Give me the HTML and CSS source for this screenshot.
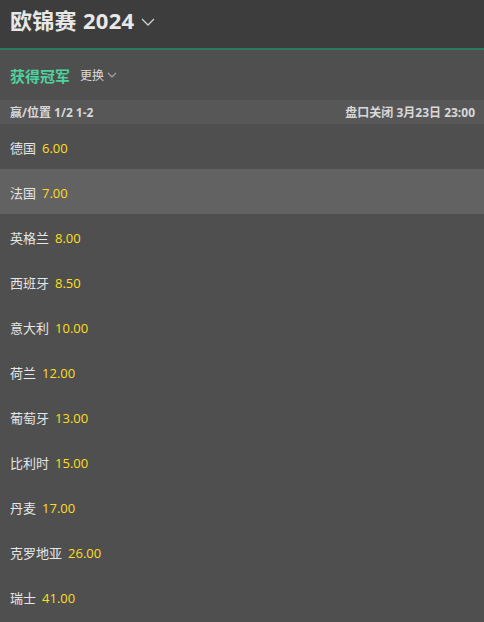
FILE: index.html
```html
<!DOCTYPE html>
<html lang="zh">
<head>
<meta charset="utf-8">
<link rel="stylesheet" href="styles.css">
</head>
<body>
<header class="top">
  <h1 class="title">欧锦赛 2024 <svg class="chev-lg" viewBox="0 0 14 8" width="14" height="8"><path d="M1 1 L7 7 L13 1" fill="none" stroke="#cfcfcf" stroke-width="1.3"/></svg></h1>
</header>
<div class="market">
  <span class="market-name">获得冠军</span>
  <span class="switch">更换 <svg class="chev-sm" viewBox="0 0 10 6" width="10" height="6"><path d="M1 1 L5 5 L9 1" fill="none" stroke="#a8a8a8" stroke-width="1.1"/></svg></span>
</div>
<div class="band">
  <span>赢/位置 1/2 1-2</span>
  <span>盘口关闭 3月23日 23:00</span>
</div>
<ul class="list">
  <li class="row"><span class="team">德国</span><span class="odds">6.00</span></li>
  <li class="row active"><span class="team">法国</span><span class="odds">7.00</span></li>
  <li class="row"><span class="team">英格兰</span><span class="odds">8.00</span></li>
  <li class="row"><span class="team">西班牙</span><span class="odds">8.50</span></li>
  <li class="row"><span class="team">意大利</span><span class="odds">10.00</span></li>
  <li class="row"><span class="team">荷兰</span><span class="odds">12.00</span></li>
  <li class="row"><span class="team">葡萄牙</span><span class="odds">13.00</span></li>
  <li class="row"><span class="team">比利时</span><span class="odds">15.00</span></li>
  <li class="row"><span class="team">丹麦</span><span class="odds">17.00</span></li>
  <li class="row"><span class="team">克罗地亚</span><span class="odds">26.00</span></li>
  <li class="row"><span class="team">瑞士</span><span class="odds">41.00</span></li>
</ul>
</body>
</html>
```
FILE: styles.css
```css
* { box-sizing: border-box; }
html, body { margin: 0; padding: 0; }
body {
  background: #4f4f4f;
  font-family: "Open Sans", "Noto Sans CJK SC", sans-serif;
  color: #e2e2e2;
  width: 484px;
  height: 622px;
  overflow: hidden;
}
.top {
  height: 50px;
  background: #3d3d3d;
  border-bottom: 2px solid #2b7a60;
  display: flex;
  align-items: flex-start;
  padding: 7px 10px 0;
}
.title {
  margin: 0;
  font-size: 22px;
  font-weight: 700;
  color: #e8e8e8;
  line-height: 26px;
  display: flex;
  align-items: center;
  letter-spacing: 0.3px;
}
.chev-lg { margin-left: 7px; margin-top: 3px; }
.market {
  height: 50px;
  display: flex;
  align-items: center;
  padding: 0 10px;
  gap: 10px;
}
.market-name {
  font-size: 15px;
  font-weight: 700;
  color: #4fd19f;
}
.switch {
  font-size: 12px;
  color: #dcdcdc;
  display: flex;
  align-items: center;
  gap: 3px;
}
.band {
  height: 24px;
  background: #575757;
  display: flex;
  align-items: center;
  justify-content: space-between;
  padding: 0 9px 0 10px;
  font-size: 12px;
  font-weight: 700;
  color: #d8d8d8;
}
.list { list-style: none; margin: 0; padding: 0; }
.row {
  height: 45px;
  display: flex;
  align-items: center;
  padding: 2px 10px 0;
  gap: 6px;
  font-size: 13px;
}
.row.active { background: #626262; }
.team { color: #e6e6e6; }
.odds { color: #ffdf1b; }
```
